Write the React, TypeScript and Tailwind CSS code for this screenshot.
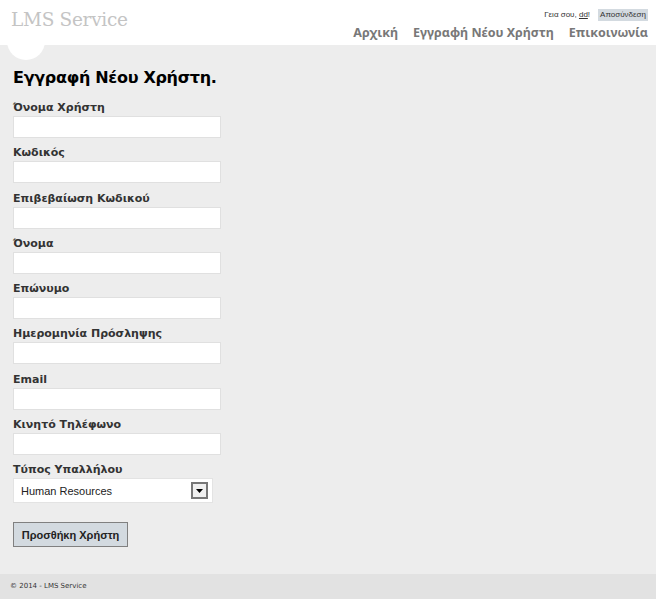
import React from "react";

const fields = [
  "Όνομα Χρήστη",
  "Κωδικός",
  "Επιβεβαίωση Κωδικού",
  "Όνομα",
  "Επώνυμο",
  "Ημερομηνία Πρόσληψης",
  "Email",
  "Κινητό Τηλέφωνο",
];

export default function App() {
  return (
    <div className="min-h-[599px] flex flex-col bg-[#ededed] font-['DejaVu_Sans',sans-serif]">
      <header className="relative bg-white h-[45px] flex justify-between">
        <div className="absolute left-[7px] top-[22px] w-[38px] h-[38px] rounded-full bg-white" />
        <div className="relative pl-[11px] pt-[8px] text-[18.5px] leading-[24px] text-[#c4c4c4] font-['DejaVu_Serif',serif] tracking-[-0.3px]">
          LMS Service
        </div>
        <div className="flex flex-col items-end pr-[8px] pt-[9px]">
          <div className="flex items-center text-[8px] leading-[12px] font-['Liberation_Sans',sans-serif] text-[#333]">
            <span>
              Γεια σου, <span className="underline">dd</span>!
            </span>
            <span className="ml-[8px] bg-[#d3dae0] px-[2px] leading-[12px]">Αποσύνδεση</span>
          </div>
          <nav className="flex gap-[15px] mt-[4px] text-[12.5px] leading-[16px] font-bold text-[#787878] font-['Noto_Sans',sans-serif]">
            <span>Αρχική</span>
            <span>Εγγραφή Νέου Χρήστη</span>
            <span>Επικοινωνία</span>
          </nav>
        </div>
      </header>
      <main className="flex-1 px-[13px] pt-[23px]">
        <h1 className="text-[16px] leading-[20px] font-bold text-black mb-[13px] tracking-[-0.3px]">Εγγραφή Νέου Χρήστη.</h1>
        {fields.map((f) => (
          <div key={f} className="h-[45.3px]">
            <div className="text-[11px] leading-[13px] font-bold text-[#333]">{f}</div>
            <div className="mt-[2px] w-[208px] h-[22px] bg-white border border-[#e0e0e0]" />
          </div>
        ))}
        <div className="text-[11px] leading-[13px] font-bold text-[#333]">Τύπος Υπαλλήλου</div>
        <div className="mt-[2px] w-[200px] h-[25px] bg-white border border-[#e3e3e3] flex items-center justify-between pl-[7px] pr-[4px]">
          <span className="text-[11px] font-['Liberation_Sans',sans-serif] text-[#222]">Human Resources</span>
          <span className="w-[17px] h-[17px] border-2 border-[#777] bg-[#f0f0f0] flex items-center justify-center">
            <svg width="7" height="4" viewBox="0 0 7 4"><path d="M0 0h7L3.5 4z" fill="#000" /></svg>
          </span>
        </div>
        <button className="mt-[19px] w-[115px] h-[25px] bg-[#d3dae0] border border-[#808080] text-[11px] font-bold text-[#222] font-['Liberation_Sans',sans-serif]">
          Προσθήκη Χρήστη
        </button>
      </main>
      <footer className="h-[25px] bg-[#e2e2e2] flex items-center pl-[10px] text-[7px] text-[#333]">
        © 2014 - LMS Service
      </footer>
    </div>
  );
}
